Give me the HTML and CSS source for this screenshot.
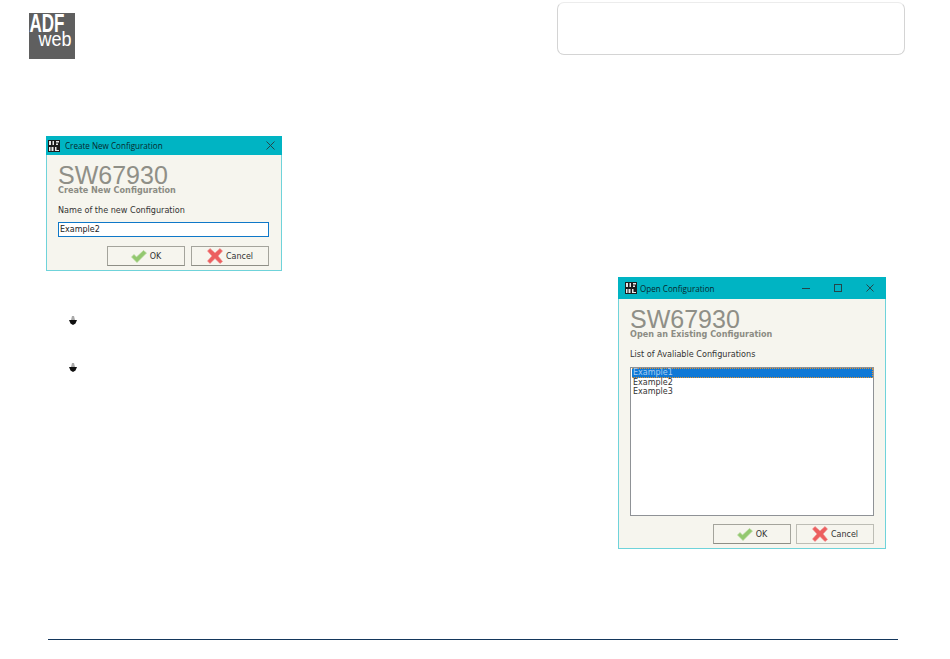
FILE: index.html
```html
<!DOCTYPE html>
<html lang="en">
<head>
<meta charset="utf-8">
<title>SW67930</title>
<link rel="stylesheet" href="styles.css">
</head>
<body>
<div class="page">
  <header class="top">
    <svg class="logo" width="46" height="46" viewBox="0 0 46 46">
      <rect width="46" height="46" fill="#5f5f5f"/>
      <text class="logo-adf" x="0.500" y="19" textLength="35" lengthAdjust="spacingAndGlyphs">ADF</text>
      <text class="logo-web" x="9.500" y="33" textLength="33" lengthAdjust="spacingAndGlyphs">web</text>
    </svg>
    <div class="title-box"></div>
  </header>

  <section class="dialog dialog-new">
    <div class="titlebar">
      <svg class="app-icon" width="12" height="12" viewBox="0 0 12 12"><rect width="12" height="12" fill="#1b1b1b"/><path d="M1 1h2v4H1zM4.500 1h1.500v4H4.500zM8 1h3v1.500H8zM8 3.500h2V5H8zM1 7h1.500v4H1zM3.500 7h2v4h-2zM7 7h1.500v3H11v1H7z" fill="#e8e8e8"/></svg>
      <span class="title-text">Create New Configuration</span>
      <svg class="win-btn close-new" width="9" height="9" viewBox="0 0 9 9"><path d="M.5.5l8 8M8.500.5l-8 8" stroke="#24464a" fill="none"/></svg>
    </div>
    <div class="body">
      <div class="product">SW67930</div>
      <div class="subtitle">Create New Configuration</div>
      <label class="field-label">Name of the new Configuration</label>
      <div class="input">Example2</div>
      <div class="buttons">
        <div class="btn"><svg class="ic" width="16" height="13" viewBox="0 0 16 13"><path d="M0.500 7l2.500-2.500 2.500 2.500L12.500.5l3 2.500L6 12.500z" fill="#93c86f" stroke="#b5d99c" stroke-width=".7"/></svg><span>OK</span></div>
        <div class="btn"><svg class="ic" width="16" height="16" viewBox="0 0 16 16"><path d="M0.500 3L3 .5l5 4.500 5-4.500L15.500 3l-4.500 5 4.500 5.500L13 15.500l-5-5-5 5L.5 13 5 8z" fill="#ec5f5f" stroke="#f08a8a" stroke-width=".6"/></svg><span>Cancel</span></div>
      </div>
    </div>
  </section>

  <ul class="bullets">
    <li><svg width="8" height="9" viewBox="0 0 8 9"><path d="M3 0h2l1 4H2z" fill="#a9a9a9"/><path d="M0 4h8L6.500 7.500 4 9 1.500 7.500z" fill="#111"/></svg></li>
    <li><svg width="8" height="9" viewBox="0 0 8 9"><path d="M3 0h2l1 4H2z" fill="#a9a9a9"/><path d="M0 4h8L6.500 7.500 4 9 1.500 7.500z" fill="#111"/></svg></li>
  </ul>

  <section class="dialog dialog-open">
    <div class="titlebar titlebar-open">
      <svg class="app-icon" width="12" height="12" viewBox="0 0 12 12"><rect width="12" height="12" fill="#1b1b1b"/><path d="M1 1h2v4H1zM4.500 1h1.500v4H4.500zM8 1h3v1.500H8zM8 3.500h2V5H8zM1 7h1.500v4H1zM3.500 7h2v4h-2zM7 7h1.500v3H11v1H7z" fill="#e8e8e8"/></svg>
      <span class="title-text title-open">Open Configuration</span>
      <div class="win-btns">
        <svg width="8" height="8" viewBox="0 0 8 8"><path d="M0 4.500h8" stroke="#24464a" fill="none"/></svg>
        <svg width="8" height="8" viewBox="0 0 8 8"><rect x=".5" y=".5" width="7" height="7" stroke="#24464a" fill="none"/></svg>
        <svg width="8" height="8" viewBox="0 0 8 8"><path d="M.5.5l7 7M7.500.5l-7 7" stroke="#24464a" fill="none"/></svg>
      </div>
    </div>
    <div class="body">
      <div class="product">SW67930</div>
      <div class="subtitle">Open an Existing Configuration</div>
      <label class="field-label">List of Avaliable Configurations</label>
      <div class="listbox">
        <div class="item selected">Example1</div>
        <div class="item">Example2</div>
        <div class="item">Example3</div>
      </div>
      <div class="buttons buttons-open">
        <div class="btn"><svg class="ic" width="16" height="13" viewBox="0 0 16 13"><path d="M0.500 7l2.500-2.500 2.500 2.500L12.500.5l3 2.500L6 12.500z" fill="#93c86f" stroke="#b5d99c" stroke-width=".7"/></svg><span>OK</span></div>
        <div class="btn btn-light"><svg class="ic" width="16" height="16" viewBox="0 0 16 16"><path d="M0.500 3L3 .5l5 4.500 5-4.500L15.500 3l-4.500 5 4.500 5.500L13 15.500l-5-5-5 5L.5 13 5 8z" fill="#ec5f5f" stroke="#f08a8a" stroke-width=".6"/></svg><span>Cancel</span></div>
      </div>
    </div>
  </section>

  <footer class="rule"></footer>
</div>
</body>
</html>
```
FILE: styles.css
```css
* { box-sizing: border-box; }
html, body { margin: 0; padding: 0; background: #fff; }
body { font-family: "Liberation Sans", Arial, sans-serif; overflow: hidden; }
.page { position: relative; width: 950px; height: 659px; }

.top { display: flex; justify-content: space-between; align-items: flex-start; padding: 2px 45px 0 29px; }
.logo { display: block; margin-top: 11px; }
.logo-adf { font: bold 26px "Liberation Sans", sans-serif; fill: #fff; }
.logo-web { font: 20px "Liberation Sans", sans-serif; fill: #fff; }
.title-box { width: 348px; height: 53px; border: 1px solid #d4d4d4; border-top-color: #ececec; border-radius: 7px; }

.dialog { position: absolute; background: #f6f5ee; border: 1px solid #6fd3da; border-top: 0; display: flex; flex-direction: column; }
.dialog-new { left: 46px; top: 136px; width: 236px; height: 135px; }
.dialog-open { left: 618px; top: 277px; width: 268px; height: 272px; }

.titlebar { display: flex; align-items: center; height: 19px; margin: 0 -1px; padding: 0 7px 0 2px; background: #00b4c3; flex: none; }
.titlebar-open { height: 22px; padding: 0 12px 0 7px; }
.app-icon { flex: none; }
.title-text { margin-left: 5px; font: 8.100px "Open Sans", sans-serif; color: #08282d; white-space: nowrap; }
.title-open { margin-left: 3px; }
.close-new { margin-left: auto; }
.win-btns { display: flex; gap: 24px; margin-left: auto; }

.body { display: flex; flex-direction: column; flex: 1; min-height: 0; padding: 10px 11px 0 11px; }
.dialog-new .body { padding-right: 12px; }

.product { font: 25px/21px "Liberation Sans", Arial, sans-serif; color: #8f8f87; white-space: nowrap; }
.subtitle { font: bold 8.100px/9px "DejaVu Sans", sans-serif; color: #8c8c84; white-space: nowrap; }
.field-label { margin-top: 10px; font: 8.100px/11px "DejaVu Sans", sans-serif; color: #333; white-space: nowrap; }

.input { margin-top: 6px; height: 15px; background: #fff; border: 1px solid #0f78c8; padding: 0 1px; font: 8px/13px "DejaVu Sans", sans-serif; color: #222; }

.buttons { display: flex; justify-content: flex-end; gap: 6px; margin-top: 9px; }
.buttons-open { gap: 5px; margin-top: 8px; }
.btn { display: flex; align-items: center; justify-content: center; gap: 3px; width: 78px; height: 20px; border: 1px solid #a4a49c; border-bottom-color: #8e8e86; background: #f6f5ee; font: 8px "DejaVu Sans", sans-serif; color: #333; }
.btn-light { border-color: #bdbdb5; }
.ic { flex: none; }

.listbox { margin-top: 7px; height: 149px; background: #fff; border: 1px solid #8f9296; padding: 0 0 0 1px; font: 8px/9.500px "DejaVu Sans", sans-serif; color: #333; }
.item { padding-left: 1px; height: 9.500px; }
.selected { background: #0f78d6; color: #a9cdf0; border-top: 1px dotted #e8922c; border-bottom: 1px dotted #e8922c; border-right: 1px dotted #e8922c; line-height: 8px; }

.bullets { position: absolute; left: 69px; top: 316px; margin: 0; padding: 0; list-style: none; display: flex; flex-direction: column; gap: 38px; }
.bullets li { height: 9px; }
.bullets svg { display: block; }

.rule { position: absolute; left: 48px; top: 639px; width: 850px; height: 1px; background: #14375c; }
```
